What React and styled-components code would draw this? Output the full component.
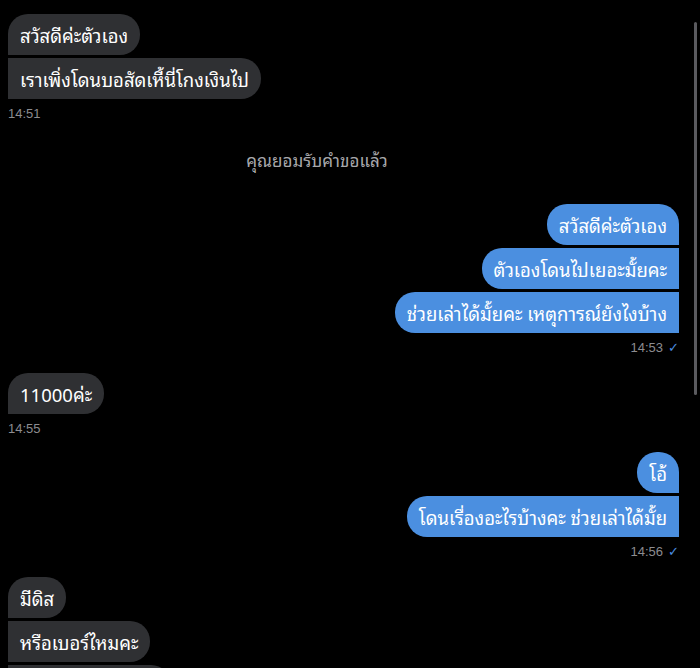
import styled, { createGlobalStyle, css } from 'styled-components';

const GlobalStyle = createGlobalStyle`
  html, body {
    margin: 0;
    padding: 0;
    background: #000;
    overflow: hidden;
  }
  body {
    font-family: 'Noto Sans Thai Looped', 'Garuda', 'Loma', 'Noto Sans Thai', 'Noto Sans', 'Liberation Sans', sans-serif;
  }
`;

const Screen = styled.div`
  position: relative;
  width: 700px;
  height: 668px;
  background: #000;
  overflow: hidden;
`;

const Thread = styled.div`
  display: flex;
  flex-direction: column;
  padding: 14px 21px 0 8px;
`;

const Group = styled.div`
  display: flex;
  flex-direction: column;
  align-items: ${({ $out }) => ($out ? 'flex-end' : 'flex-start')};
  gap: 3px;
  margin-bottom: ${({ $mb }) => $mb}px;
`;

const Bubble = styled.div`
  height: 41px;
  box-sizing: border-box;
  padding: 0 12px;
  display: flex;
  align-items: center;
  font-size: 18.5px;
  color: #fff;
  white-space: nowrap;
  border-radius: 20px;
  ${({ $out, $first }) =>
    $out
      ? css`
          background: #4b8fe0;
          border-top-right-radius: ${$first ? '20px' : '0'};
          border-bottom-right-radius: 0;
        `
      : css`
          background: #2f3033;
          border-top-left-radius: ${$first ? '20px' : '0'};
          border-bottom-left-radius: 0;
        `}
`;

const Time = styled.div`
  margin-top: 4px;
  height: 16px;
  line-height: 16px;
  font-family: 'Liberation Sans', sans-serif;
  font-size: 13px;
  color: #8c8c90;
  display: flex;
  align-items: center;
  gap: 5px;
`;

const Check = styled.span`
  color: #4b8fe0;
  font-size: 13px;
`;

const System = styled.div`
  height: 22px;
  text-align: center;
  font-size: 17px;
  line-height: 22px;
  color: #a8a8ac;
  padding-right: 53px;
  margin-bottom: 33px;
`;

const Scrollbar = styled.div`
  position: absolute;
  right: 3px;
  top: 22px;
  width: 3px;
  height: 373px;
  border-radius: 2px;
  background: #5a5a5e;
`;

const thread = [
  { out: false, msgs: ['สวัสดีค่ะตัวเอง', 'เราเพิ่งโดนบอสัดเหี้นี่โกงเงินไป'], time: '14:51', mb: 27 },
  { system: 'คุณยอมรับคำขอแล้ว' },
  {
    out: true,
    msgs: ['สวัสดีค่ะตัวเอง', 'ตัวเองโดนไปเยอะมั้ยคะ', 'ช่วยเล่าได้มั้ยคะ เหตุการณ์ยังไงบ้าง'],
    time: '14:53',
    mb: 17,
  },
  { out: false, msgs: ['11000ค่ะ'], time: '14:55', mb: 15 },
  { out: true, msgs: ['โอ้', 'โดนเรื่องอะไรบ้างคะ ช่วยเล่าได้มั้ย'], time: '14:56', mb: 17 },
  { out: false, msgs: ['มีดิส', 'หรือเบอร์ไหมคะ', 'ส่งมาให้เราดูหน่อย'], mb: 0 },
];

function App() {
  return (
    <Screen>
      <GlobalStyle />
      <Thread>
        {thread.map((g, i) =>
          g.system ? (
            <System key={i}>{g.system}</System>
          ) : (
            <Group key={i} $out={g.out} $mb={g.mb}>
              {g.msgs.map((m, j) => (
                <Bubble key={j} $out={g.out} $first={j === 0}>
                  {m}
                </Bubble>
              ))}
              {g.time && (
                <Time>
                  {g.time}
                  {g.out && <Check>✓</Check>}
                </Time>
              )}
            </Group>
          )
        )}
      </Thread>
      <Scrollbar />
    </Screen>
  );
}

export default App;
